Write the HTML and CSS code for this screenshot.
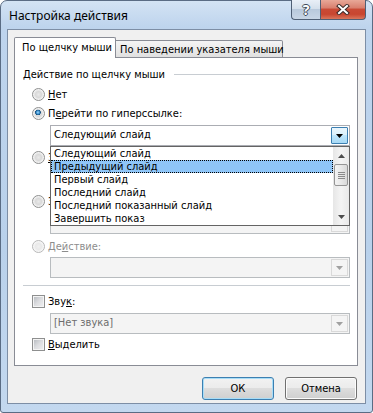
FILE: index.html
```html
<!DOCTYPE html>
<html lang="ru">
<head>
    <meta charset="UTF-8">
    <title>Настройка действия</title>
    <link rel="stylesheet" href="styles.css">
</head>
<body>
    <div class="window">
        <div class="titlebar">
            <span class="title">Настройка действия</span>
            <div class="caption-btns">
                <span class="cap-btn help">?</span>
                <span class="cap-btn close">
                    <svg width="14" height="11" viewBox="0 0 14 11">
                        <path d="M3 2 L11 9 M11 2 L3 9" stroke="#3b2a28" stroke-width="4" stroke-linecap="square"/>
                        <path d="M3 2 L11 9 M11 2 L3 9" stroke="#fff" stroke-width="2" stroke-linecap="square"/>
                    </svg>
                </span>
            </div>
        </div>

        <div class="client">
            <div class="tabs">
                <div class="tab active">По щелчку мыши</div>
                <div class="tab">По наведении указателя мыши</div>
                <div class="tab-fill"></div>
            </div>

            <div class="panel">
                <div class="group-title">Действие по щелчку мыши</div>

                <label class="option row-none"><span class="radio"></span><span><u>Н</u>ет</span></label>
                <label class="option row-link"><span class="radio checked"></span><span>П<u>е</u>рейти по гиперссылке:</span></label>

                <div class="combo-wrap">
                    <div class="combo focused">
                        <span class="combo-value">Следующий слайд</span>
                        <span class="combo-arrow">
                            <svg width="7" height="4" viewBox="0 0 7 4"><path d="M0 0 H7 L3.5 4 Z" fill="#000"/></svg>
                        </span>
                    </div>
                    <div class="dropdown">
                        <ul class="dropdown-list">
                            <li>Следующий слайд</li>
                            <li class="selected">Предыдущий слайд</li>
                            <li>Первый слайд</li>
                            <li>Последний слайд</li>
                            <li>Последний показанный слайд</li>
                            <li>Завершить показ</li>
                        </ul>
                        <div class="scrollbar">
                            <span class="sb-arrow">
                                <svg width="7" height="4" viewBox="0 0 7 4"><path d="M0 4 H7 L3.5 0 Z" fill="#4d4d4d"/></svg>
                            </span>
                            <span class="sb-thumb"><i></i><i></i><i></i><i></i></span>
                            <span class="sb-track"></span>
                            <span class="sb-arrow">
                                <svg width="7" height="4" viewBox="0 0 7 4"><path d="M0 0 H7 L3.5 4 Z" fill="#4d4d4d"/></svg>
                            </span>
                        </div>
                    </div>
                </div>

                <label class="option row-program"><span class="radio"></span><span><u>З</u>апуск программы:</span></label>
                <div class="field-row">
                    <span class="field"></span>
                    <span class="btn small"></span>
                </div>

                <label class="option row-macro"><span class="radio"></span><span>Запуск <u>м</u>акроса:</span></label>
                <div class="combo disabled row-macro-combo">
                    <span class="combo-value"></span>
                    <span class="combo-arrow">
                        <svg width="7" height="4" viewBox="0 0 7 4"><path d="M0 0 H7 L3.5 4 Z" fill="#a0a0a0"/></svg>
                    </span>
                </div>

                <label class="option disabled row-action"><span class="radio"></span><span>Де<u>й</u>ствие:</span></label>
                <div class="combo disabled row-action-combo">
                    <span class="combo-value"></span>
                    <span class="combo-arrow">
                        <svg width="7" height="4" viewBox="0 0 7 4"><path d="M0 0 H7 L3.5 4 Z" fill="#a0a0a0"/></svg>
                    </span>
                </div>

                <div class="separator"></div>

                <label class="option row-sound"><span class="check"></span><span>Зву<u>к</u>:</span></label>
                <div class="combo disabled row-sound-combo">
                    <span class="combo-value">[Нет звука]</span>
                    <span class="combo-arrow">
                        <svg width="7" height="4" viewBox="0 0 7 4"><path d="M0 0 H7 L3.5 4 Z" fill="#a0a0a0"/></svg>
                    </span>
                </div>

                <label class="option row-highlight"><span class="check"></span><span><u>В</u>ыделить</span></label>
            </div>

            <div class="buttons">
                <span class="btn default">ОК</span>
                <span class="btn">Отмена</span>
            </div>
        </div>
    </div>
</body>
</html>
```

FILE: styles.css
```css
* {
    box-sizing: border-box;
}

body {
    margin: 0;
    background: #fff;
    font-family: "DejaVu Sans Condensed", "DejaVu Sans", sans-serif;
    font-stretch: condensed;
    font-size: 11px;
    color: #000;
}

u {
    text-decoration: underline;
    text-underline-offset: 1px;
}

/* window frame */
.window {
    width: 373px;
    height: 413px;
    border: 1px solid #5a6c84;
    border-radius: 7px 7px 3px 3px;
    background: linear-gradient(180deg, #d3e3f4 0, #bed4ed 26px, #b9d1eb 60%, #c3d8ef 100%);
    padding: 0 6px 8px 6px;
    display: flex;
    flex-direction: column;
}

.titlebar {
    height: 28px;
    display: flex;
    justify-content: space-between;
    align-items: flex-start;
}

.title {
    padding: 7px 0 0 2px;
    line-height: 15px;
    font-family: "Noto Sans", sans-serif;
    font-stretch: normal;
    font-size: 12px;
}

.caption-btns {
    display: flex;
    margin-top: -1px;
}

.cap-btn {
    height: 20px;
    display: flex;
    align-items: center;
    justify-content: center;
    border: 1px solid #4f5f75;
    border-top: none;
}

.help {
    width: 29px;
    border-right: none;
    border-radius: 0 0 0 4px;
    background: linear-gradient(180deg, #e9eff7 0, #d5e0ec 45%, #b9c9dc 50%, #c8d6e6 100%);
    color: #fff;
    font-family: "Noto Sans", sans-serif;
    font-weight: bold;
    font-size: 14px;
    text-shadow: 1px 0 0 #3e4a58, -1px 0 0 #3e4a58, 0 1px 0 #3e4a58, 0 -1px 0 #3e4a58;
}

.close {
    width: 46px;
    border-radius: 0 0 4px 0;
    background: linear-gradient(180deg, #e8a898 0, #d98170 40%, #c94a35 50%, #c84630 75%, #d9765c 100%);
}

/* client area */
.client {
    flex: 1;
    background: #f0f0f0;
    border: 1px solid #7d8ea5;
    padding: 7px 7px 0 6px;
    display: flex;
    flex-direction: column;
}

.tabs {
    display: flex;
    align-items: flex-end;
    height: 21px;
}

.tab {
    border: 1px solid #898c95;
    line-height: 15px;
    white-space: nowrap;
}

.tab.active {
    width: 102px;
    height: 21px;
    border-bottom: none;
    border-radius: 2px 2px 0 0;
    background: #fff;
    padding: 2px 0 0 7px;
}

.tab:not(.active) {
    width: 167px;
    height: 18px;
    border-left: none;
    border-radius: 0 2px 0 0;
    background: linear-gradient(180deg, #f4f4f4 0, #ebebeb 50%, #e0e0e0 100%);
    padding: 1px 0 0 4px;
}

.tab-fill {
    flex: 1;
    border-bottom: 1px solid #898c95;
}

.panel {
    background: #fff;
    border: 1px solid #898c95;
    border-top: none;
    padding: 9px 7px 13px 8px;
    display: flex;
    flex-direction: column;
}

.group-title {
    display: flex;
    align-items: center;
    height: 15px;
    line-height: 15px;
    gap: 9px;
    white-space: nowrap;
}

.group-title::after {
    content: "";
    flex: 1;
    border-top: 1px solid #c8cdd2;
}

/* radio / checkbox rows */
.option {
    display: flex;
    align-items: center;
    height: 15px;
    line-height: 15px;
    margin-left: 9px;
    gap: 3px;
    white-space: nowrap;
}

.option.disabled {
    color: #8d8d8d;
}

.radio {
    width: 13px;
    height: 13px;
    border-radius: 50%;
    border: 1px solid #8e8f8f;
    background: radial-gradient(circle at 50% 50%, #e9e9e9 0, #d9d9d9 3px, #f1f1f1 5px, #ffffff 6px);
    flex-shrink: 0;
}

.radio.checked {
    background:
        radial-gradient(circle at 45% 40%, #a6dcfb 0, #3f95d4 1.5px, #17507e 2.6px, transparent 3px),
        radial-gradient(circle at 50% 50%, #e9e9e9 0, #d9d9d9 3px, #f1f1f1 5px, #ffffff 6px);
}

.option.disabled .radio {
    border-color: #b8b8b8;
    background: radial-gradient(circle at 50% 50%, #f0f0f0 0, #e9e9e9 3px, #f6f6f6 5px, #fff 6px);
}

.check {
    width: 13px;
    height: 13px;
    border: 1px solid #8e8f8f;
    background: linear-gradient(135deg, #b3b7bc 0, #dcdde0 50%, #f0f0f1 100%);
    box-shadow: inset 0 0 0 1px #f4f4f4;
    flex-shrink: 0;
}

/* combo boxes */
.combo {
    height: 21px;
    margin-left: 27px;
    border: 1px solid #abadb3;
    background: #fff;
    display: flex;
}

.combo-value {
    flex: 1;
    padding-left: 3px;
    line-height: 18px;
    white-space: nowrap;
}

.combo-arrow {
    width: 17px;
    margin: 1px;
    display: flex;
    align-items: center;
    justify-content: center;
}

.combo.focused .combo-arrow {
    border: 1px solid #3c7fb1;
    border-radius: 1px;
    background: linear-gradient(180deg, #eaf6fd 0, #d9f0fc 50%, #bee6fd 50%, #a7d9f5 100%);
}

.combo.disabled {
    border-color: #b8bcbf;
    background: #f4f4f4;
    color: #6d6d6d;
}

.combo.disabled .combo-arrow {
    border: 1px solid #d9d9d9;
    background: #f4f4f4;
}

.combo-wrap {
    position: relative;
    margin-left: 27px;
    margin-top: 4px;
}

.combo-wrap .combo {
    margin-left: 0;
}

/* open drop-down list */
.dropdown {
    position: absolute;
    top: 100%;
    left: 0;
    right: 0;
    height: 80px;
    border: 1px solid #646464;
    background: #fff;
    display: flex;
    z-index: 2;
}

.dropdown-list {
    flex: 1;
    list-style: none;
    margin: 0;
    padding: 0;
}

.dropdown-list li {
    height: 13px;
    line-height: 13px;
    padding-left: 3px;
    white-space: nowrap;
    overflow: hidden;
}

.dropdown-list li.selected {
    background: #8fc5f7;
    outline: 1px dotted #000;
    outline-offset: -1px;
}

.scrollbar {
    width: 16px;
    background: linear-gradient(90deg, #e6e6e6 0, #f4f4f4 50%, #e9e9e9 100%);
    display: flex;
    flex-direction: column;
}

.sb-arrow {
    height: 17px;
    display: flex;
    align-items: center;
    justify-content: center;
}

.sb-thumb {
    height: 22px;
    margin: 0 1px;
    border: 1px solid #959595;
    border-radius: 2px;
    background: linear-gradient(90deg, #f3f3f3 0, #e8e8e8 50%, #d9d9d9 100%);
    display: flex;
    flex-direction: column;
    align-items: center;
    justify-content: center;
    gap: 1px;
}

.sb-thumb i {
    display: block;
    width: 7px;
    height: 1px;
    background: #8a8a8a;
}

.sb-track {
    flex: 1;
}

/* the row hidden behind the list */
.field-row {
    display: flex;
    gap: 6px;
    height: 22px;
    margin: 3px 0 0 27px;
}

.field {
    flex: 1;
    border: 1px solid #b8bcbf;
    background: #f4f4f4;
}

.btn {
    width: 72px;
    height: 23px;
    border: 1px solid #707070;
    border-radius: 3px;
    background: linear-gradient(180deg, #f2f2f2 0, #ebebeb 50%, #dddddd 50%, #cfcfcf 100%);
    box-shadow: inset 0 0 0 1px #fcfcfc;
    display: flex;
    align-items: center;
    justify-content: center;
}

.btn.small {
    width: 75px;
    height: 22px;
}

.btn.default {
    border-color: #3c7fb1;
    box-shadow: inset 0 0 0 1px #a8ddf7;
}

/* vertical rhythm of the panel */
.row-none { margin-top: 5px; }
.row-link { margin-top: 4px; }
.row-program { margin-top: 4px; }
.row-macro { margin-top: 4px; }
.row-macro-combo { margin-top: 4px; }
.row-action { margin-top: 5px; }
.row-action-combo { margin-top: 3px; }
.row-sound { margin-top: 8px; }
.row-sound-combo { margin-top: 4px; }
.row-highlight { margin-top: 3px; }

.separator {
    margin-top: 7px;
    height: 1px;
    background: #c8cdd2;
}

.buttons {
    display: flex;
    justify-content: flex-end;
    gap: 11px;
    margin: 11px 1px 0 0;
}
```
